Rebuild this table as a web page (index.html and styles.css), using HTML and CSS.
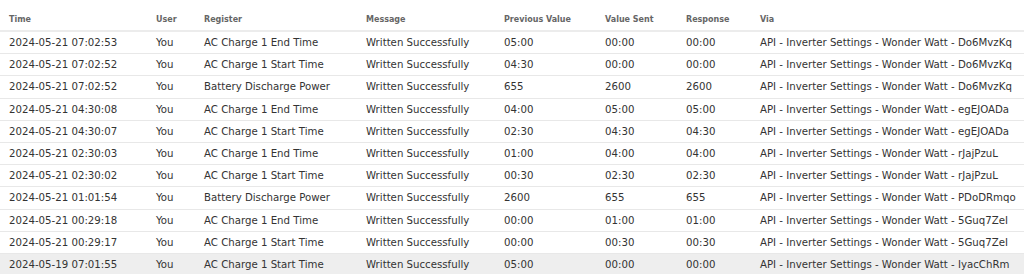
FILE: index.html
```html
<!DOCTYPE html>
<html lang="en">
<head>
    <meta charset="UTF-8">
    <title>Write History</title>
    <link rel="stylesheet" href="styles.css">
</head>
<body>
    <table class="history">
        <colgroup>
            <col class="c-time">
            <col class="c-user">
            <col class="c-register">
            <col class="c-message">
            <col class="c-prev">
            <col class="c-sent">
            <col class="c-resp">
            <col class="c-via">
        </colgroup>
        <thead>
            <tr>
                <th>Time</th>
                <th>User</th>
                <th>Register</th>
                <th>Message</th>
                <th>Previous Value</th>
                <th>Value Sent</th>
                <th>Response</th>
                <th>Via</th>
            </tr>
        </thead>
        <tbody>
            <tr>
                <td>2024-05-21 07:02:53</td><td>You</td><td>AC Charge 1 End Time</td><td>Written Successfully</td>
                <td>05:00</td><td>00:00</td><td>00:00</td><td>API - Inverter Settings - Wonder Watt - Do6MvzKq</td>
            </tr>
            <tr>
                <td>2024-05-21 07:02:52</td><td>You</td><td>AC Charge 1 Start Time</td><td>Written Successfully</td>
                <td>04:30</td><td>00:00</td><td>00:00</td><td>API - Inverter Settings - Wonder Watt - Do6MvzKq</td>
            </tr>
            <tr>
                <td>2024-05-21 07:02:52</td><td>You</td><td>Battery Discharge Power</td><td>Written Successfully</td>
                <td>655</td><td>2600</td><td>2600</td><td>API - Inverter Settings - Wonder Watt - Do6MvzKq</td>
            </tr>
            <tr>
                <td>2024-05-21 04:30:08</td><td>You</td><td>AC Charge 1 End Time</td><td>Written Successfully</td>
                <td>04:00</td><td>05:00</td><td>05:00</td><td>API - Inverter Settings - Wonder Watt - egEJOADa</td>
            </tr>
            <tr>
                <td>2024-05-21 04:30:07</td><td>You</td><td>AC Charge 1 Start Time</td><td>Written Successfully</td>
                <td>02:30</td><td>04:30</td><td>04:30</td><td>API - Inverter Settings - Wonder Watt - egEJOADa</td>
            </tr>
            <tr>
                <td>2024-05-21 02:30:03</td><td>You</td><td>AC Charge 1 End Time</td><td>Written Successfully</td>
                <td>01:00</td><td>04:00</td><td>04:00</td><td>API - Inverter Settings - Wonder Watt - rJajPzuL</td>
            </tr>
            <tr>
                <td>2024-05-21 02:30:02</td><td>You</td><td>AC Charge 1 Start Time</td><td>Written Successfully</td>
                <td>00:30</td><td>02:30</td><td>02:30</td><td>API - Inverter Settings - Wonder Watt - rJajPzuL</td>
            </tr>
            <tr>
                <td>2024-05-21 01:01:54</td><td>You</td><td>Battery Discharge Power</td><td>Written Successfully</td>
                <td>2600</td><td>655</td><td>655</td><td>API - Inverter Settings - Wonder Watt - PDoDRmqo</td>
            </tr>
            <tr>
                <td>2024-05-21 00:29:18</td><td>You</td><td>AC Charge 1 End Time</td><td>Written Successfully</td>
                <td>00:00</td><td>01:00</td><td>01:00</td><td>API - Inverter Settings - Wonder Watt - 5Guq7ZeI</td>
            </tr>
            <tr>
                <td>2024-05-21 00:29:17</td><td>You</td><td>AC Charge 1 Start Time</td><td>Written Successfully</td>
                <td>00:00</td><td>00:30</td><td>00:30</td><td>API - Inverter Settings - Wonder Watt - 5Guq7ZeI</td>
            </tr>
            <tr class="hover">
                <td>2024-05-19 07:01:55</td><td>You</td><td>AC Charge 1 Start Time</td><td>Written Successfully</td>
                <td>05:00</td><td>00:00</td><td>00:00</td><td>API - Inverter Settings - Wonder Watt - IyacChRm</td>
            </tr>
        </tbody>
    </table>
</body>
</html>
```

FILE: styles.css
```css
body {
    margin: 0;
    font-family: 'DejaVu Sans', Verdana, sans-serif;
    background-color: #fff;
    color: #333;
}

.history {
    width: 1024px;
    border-collapse: collapse;
    table-layout: fixed;
}

.c-time { width: 147px; }
.c-user { width: 48px; }
.c-register { width: 162px; }
.c-message { width: 138px; }
.c-prev { width: 101px; }
.c-sent { width: 81px; }
.c-resp { width: 74px; }
.c-via { width: 273px; }

.history th {
    text-align: left;
    font-size: 8px;
    font-weight: bold;
    color: #666;
    line-height: 10px;
    padding: 15px 9px 5px;
    border-bottom: 2px solid #ececec;
    white-space: nowrap;
}

.history td {
    font-size: 10.2px;
    line-height: 11.2px;
    padding: 5px 9px;
    border-bottom: 1px solid #e8e8e8;
    white-space: nowrap;
}

.history tbody tr:hover,
.history tr.hover {
    background-color: #eeeeee;
}
```
